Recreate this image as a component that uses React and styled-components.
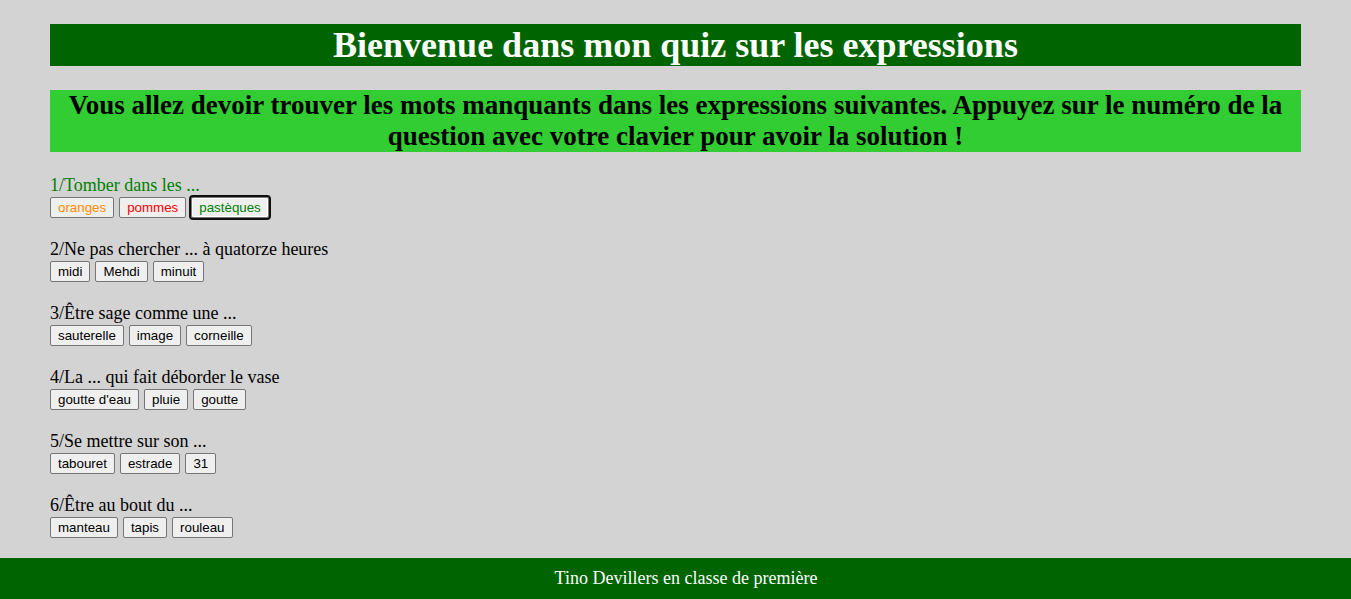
import React from "react";
import styled, { createGlobalStyle } from "styled-components";

const GlobalStyle = createGlobalStyle`
  html, body {
    margin: 0;
    padding: 0;
    background-color: lightgray;
    font-family: "Liberation Serif", "Times New Roman", serif;
  }
`;

const questions = [
  {
    text: "1/Tomber dans les ...",
    answered: true,
    choices: [
      { label: "oranges", color: "darkorange" },
      { label: "pommes", color: "red" },
      { label: "pastèques", color: "green", focused: true },
    ],
  },
  { text: "2/Ne pas chercher ... à quatorze heures", choices: [{ label: "midi" }, { label: "Mehdi" }, { label: "minuit" }] },
  { text: "3/Être sage comme une ...", choices: [{ label: "sauterelle" }, { label: "image" }, { label: "corneille" }] },
  { text: "4/La ... qui fait déborder le vase", choices: [{ label: "goutte d'eau" }, { label: "pluie" }, { label: "goutte" }] },
  { text: "5/Se mettre sur son ...", choices: [{ label: "tabouret" }, { label: "estrade" }, { label: "31" }] },
  { text: "6/Être au bout du ...", choices: [{ label: "manteau" }, { label: "tapis" }, { label: "rouleau" }] },
];

function App() {
  return (
    <>
      <GlobalStyle />
      <Page>
        <Main>
          <Title>Bienvenue dans mon quiz sur les expressions</Title>
          <Intro>
            Vous allez devoir trouver les mots manquants dans les expressions suivantes. Appuyez sur le numéro de la
            question avec votre clavier pour avoir la solution !
          </Intro>
          <QuestionList>
            {questions.map((q, i) => (
              <Question key={i}>
                <QuestionText $answered={q.answered}>{q.text}</QuestionText>
                <Choices>
                  {q.choices.map((c, j) => (
                    <Choice key={j} $color={c.color} $focused={c.focused}>
                      {c.label}
                    </Choice>
                  ))}
                </Choices>
              </Question>
            ))}
          </QuestionList>
        </Main>
        <Footer>Tino Devillers en classe de première</Footer>
      </Page>
    </>
  );
}

const Page = styled.div`
  min-height: 100vh;
  display: flex;
  flex-direction: column;
`;

const Main = styled.main`
  flex: 1;
  padding: 24px 50px 0 50px;
`;

const Title = styled.h1`
  margin: 0;
  height: 42px;
  line-height: 42px;
  background-color: darkgreen;
  color: white;
  text-align: center;
  font-size: 36px;
  font-weight: bold;
`;

const Intro = styled.h2`
  margin: 24px 0 0 0;
  padding: 0;
  min-height: 62px;
  box-sizing: border-box;
  background-color: limegreen;
  color: black;
  text-align: center;
  font-size: 27px;
  line-height: 31px;
  font-weight: bold;
`;

const QuestionList = styled.div`
  display: flex;
  flex-direction: column;
  gap: 21px;
  padding-top: 23px;
`;

const Question = styled.div`
  display: flex;
  flex-direction: column;
  gap: 2px;
`;

const QuestionText = styled.p`
  margin: 0;
  font-size: 18px;
  line-height: 20px;
  color: ${(p) => (p.$answered ? "green" : "black")};
`;

const Choices = styled.div`
  display: flex;
  gap: 5px;
`;

const Choice = styled.button`
  font-family: "Liberation Sans", Arial, sans-serif;
  font-size: 13.33px;
  height: 21px;
  padding: 1px 7px;
  background-color: #efefef;
  border: 1px solid #767676;
  border-radius: 2px;
  color: ${(p) => p.$color || "black"};
  outline: ${(p) => (p.$focused ? "2px solid #101010" : "none")};
  box-shadow: ${(p) => (p.$focused ? "inset 0 0 0 1px #ffffff" : "none")};
  cursor: pointer;
`;

const Footer = styled.footer`
  height: 41px;
  padding-left: 21px;
  background-color: darkgreen;
  color: white;
  display: flex;
  align-items: center;
  justify-content: center;
  font-size: 18px;
`;

export default App;
